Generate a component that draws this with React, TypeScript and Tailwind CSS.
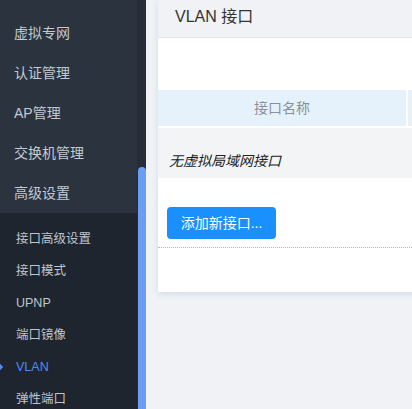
import React from 'react';

const topMenu = ['虚拟专网', '认证管理', 'AP管理', '交换机管理', '高级设置'];
const subMenu = ['接口高级设置', '接口模式', 'UPNP', '端口镜像', 'VLAN', '弹性端口'];

export default function App() {
  return (
    <div
      className="flex h-[409px] w-[412px] overflow-hidden bg-[#f0f2f5]"
      style={{ fontFamily: '"Liberation Sans", "Noto Sans CJK SC", sans-serif' }}
    >
      {/* Sidebar */}
      <aside className="flex w-[146px] shrink-0 bg-[#2b333e]">
        <div className="flex w-[137px] flex-col">
          <ul className="pt-[13px]">
            {topMenu.map((item) => (
              <li key={item} className="flex h-10 items-center pl-[14px] text-[14px] text-[#c3cad3]">
                {item}
              </li>
            ))}
          </ul>
          <ul className="flex-1 bg-[#1f252e] pt-[10px]">
            {subMenu.map((item) => {
              const active = item === 'VLAN';
              return (
                <li
                  key={item}
                  className={`relative flex h-8 items-center pl-[16px] text-[12.5px] ${
                    active ? 'text-[#4a8ff0]' : 'text-[#bfc6cf]'
                  }`}
                >
                  {active && (
                    <span className="absolute left-[-4px] top-1/2 h-[6px] w-[6px] -translate-y-1/2 rotate-45 bg-[#4a8ff0]" />
                  )}
                  {item}
                </li>
              );
            })}
          </ul>
        </div>
        <div className="flex w-[9px] flex-col bg-[#262d36] pl-[1px] pt-[167px]">
          <div className="flex-1 rounded-t-[4px] bg-[#6a9ef3]" />
        </div>
      </aside>

      {/* Main */}
      <main className="flex-1 pl-[12px]">
        <div className="w-[300px] shadow-[0_2px_6px_rgba(60,110,200,0.16)]">
          <div className="flex h-[38px] items-center border-b border-[#e3e6eb] bg-[#f0f2f5] pl-[17px] pb-[4px] text-[16px] text-[#333]">
            VLAN 接口
          </div>
          <div className="bg-white pt-[52px] pb-[44px]">
            <div className="flex h-[36px]">
              <div className="flex w-[248px] items-center justify-center bg-[#e5f2fb] text-[14px] text-[#8a9099]">
                接口名称
              </div>
              <div className="ml-[2px] flex-1 bg-[#e5f2fb]" />
            </div>
            <div className="mt-[2px] flex h-[50px] items-end bg-[#f3f4f6] pb-[6px] pl-[11px] text-[14px] italic text-[#222]">
              无虚拟局域网接口
            </div>
            <div className="pl-[9px] pt-[29px]">
              <button className="flex h-[32px] w-[109px] items-center justify-center rounded-[4px] bg-[#1990fd] text-[14px] text-white">
                添加新接口...
              </button>
            </div>
            <div className="mt-[8px] border-t border-dotted border-[#b9b9b9]" />
          </div>
        </div>
      </main>
    </div>
  );
}
